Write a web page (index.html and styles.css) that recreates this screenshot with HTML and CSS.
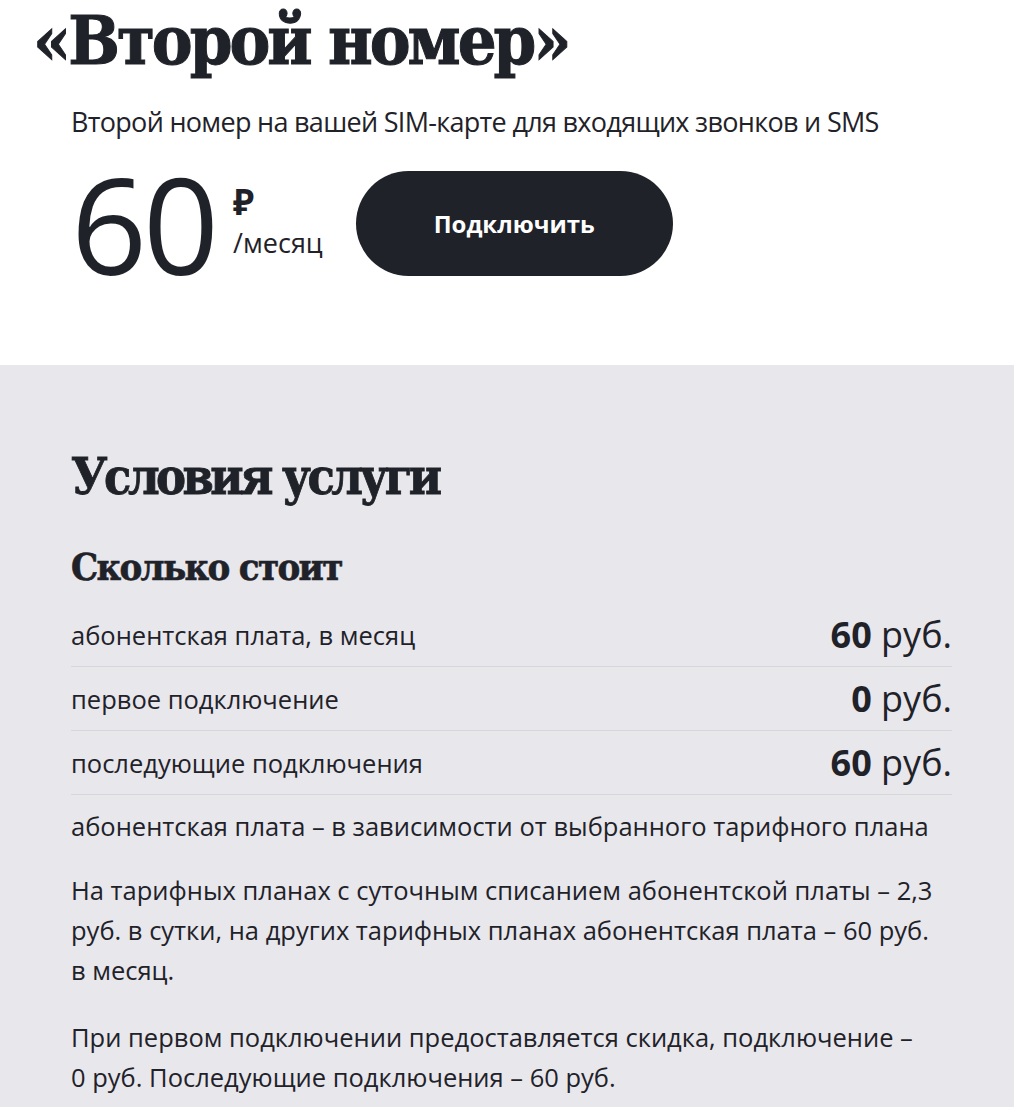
FILE: index.html
```
<!DOCTYPE html>
<html lang="ru">
<head>
    <meta charset="UTF-8">
    <meta name="viewport" content="width=device-width, initial-scale=1.0">
    <title>«Второй номер»</title>
    <link rel="stylesheet" href="styles.css">
</head>
<body>
    <header class="hero">
        <h1 class="hero-title">«Второй номер»</h1>
        <div class="hero-body">
            <p class="hero-lead">Второй номер на вашей SIM-карте для входящих звонков и SMS</p>
            <div class="price-row">
                <div class="price">
                    <span class="price-value">60</span>
                    <span class="price-unit">
                        <span class="price-rub">₽</span>
                        <span class="price-period">/месяц</span>
                    </span>
                </div>
                <button type="button" class="connect-btn">Подключить</button>
            </div>
        </div>
    </header>

    <section class="terms">
        <h2 class="terms-title">Условия услуги</h2>
        <h3 class="terms-subtitle">Сколько стоит</h3>
        <div class="cost-table">
            <div class="cost-row">
                <span class="cost-name">абонентская плата, в месяц</span>
                <span class="cost-value"><b>60</b> руб.</span>
            </div>
            <div class="cost-row">
                <span class="cost-name">первое подключение</span>
                <span class="cost-value"><b>0</b> руб.</span>
            </div>
            <div class="cost-row">
                <span class="cost-name">последующие подключения</span>
                <span class="cost-value"><b>60</b> руб.</span>
            </div>
        </div>
        <p class="terms-text terms-note">абонентская плата – в зависимости от выбранного тарифного плана</p>
        <p class="terms-text">На тарифных планах с суточным списанием абонентской платы – 2,3 руб. в сутки, на других тарифных планах абонентская плата – 60 руб. в&nbsp;месяц.</p>
        <p class="terms-text">При первом подключении предоставляется скидка, подключение – 0&nbsp;руб. Последующие подключения – 60 руб.</p>
    </section>
</body>
</html>
```
FILE: styles.css
```
body {
    margin: 0;
    background-color: #fff;
    color: #1f2229;
    font-family: "Open Sans", "Noto Sans", sans-serif;
}
.hero {
    padding: 0 62px 75px 0;
}
.hero-title {
    margin: 0 0 0 33px;
    font-family: "DejaVu Serif Condensed", "DejaVu Serif", serif;
    font-weight: bold;
    font-size: 68px;
    line-height: 80px;
    letter-spacing: -3px;
    -webkit-text-stroke: 1px #1f2229;
}
.hero-body {
    padding-left: 71px;
}
.hero-lead {
    margin: 22px 0 0;
    font-size: 27px;
    line-height: 40px;
    font-stretch: 92%;
    letter-spacing: -0.7px;
}
.price-row {
    display: flex;
    align-items: center;
    gap: 33px;
    margin-top: 15px;
}
.price {
    display: flex;
    align-items: flex-start;
}
.price-value {
    font-size: 133px;
    font-weight: 500;
    line-height: 133px;
    font-stretch: 88%;
    letter-spacing: -4px;
}
.price-unit {
    display: flex;
    flex-direction: column;
    margin-left: 18px;
    padding-top: 27px;
}
.price-rub {
    font-weight: bold;
    font-size: 35px;
    line-height: 35px;
}
.price-period {
    margin-top: 9px;
    font-size: 27px;
    line-height: 30px;
    font-stretch: 90%;
}
.connect-btn {
    width: 317px;
    height: 105px;
    border: none;
    border-radius: 53px;
    background-color: #1f2229;
    color: #fff;
    font-family: "Open Sans", sans-serif;
    font-weight: bold;
    font-size: 24px;
    font-stretch: 90%;
    cursor: pointer;
}
.terms {
    background-color: #e8e7ec;
    padding: 82px 62px 40px 71px;
}
.terms-title {
    margin: 0;
    font-family: "DejaVu Serif Condensed", "DejaVu Serif", serif;
    font-weight: bold;
    font-size: 50px;
    line-height: 60px;
    letter-spacing: -3.5px;
    -webkit-text-stroke: 0.8px #1f2229;
}
.terms-subtitle {
    margin: 36px 0 12px;
    font-family: "DejaVu Serif Condensed", "DejaVu Serif", serif;
    font-weight: bold;
    font-size: 38px;
    line-height: 48px;
    letter-spacing: -1.7px;
    -webkit-text-stroke: 0.6px #1f2229;
}
.cost-row {
    display: flex;
    justify-content: space-between;
    align-items: center;
    height: 63px;
    border-bottom: 1px solid #d4d9d4;
}
.cost-name {
    font-size: 25.5px;
    font-stretch: 95%;
}
.cost-value {
    font-size: 36px;
    font-stretch: 92%;
}
.cost-value b {
    font-weight: bold;
}
.terms-text {
    margin: 24px 0 0;
    font-size: 25.5px;
    line-height: 40px;
    font-stretch: 94%;
}
.terms-note {
    margin-top: 11px;
}
.terms-text + .terms-text + .terms-text {
    margin-top: 27px;
}
```
